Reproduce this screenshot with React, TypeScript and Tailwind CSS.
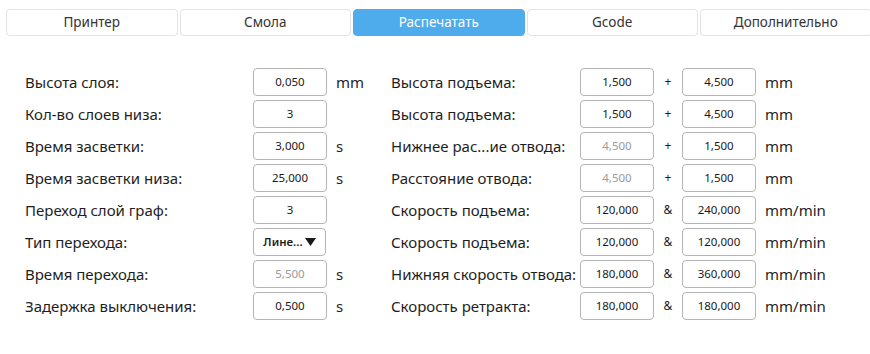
import React from 'react'

type Field = { value: string; disabled?: boolean }

type LeftRow = {
  label: string
  field?: Field
  select?: string
  unit?: string
}

type RightRow = {
  label: string
  a: Field
  b: Field
  sep: string
  unit: string
}

const tabs = ['Принтер', 'Смола', 'Распечатать', 'Gcode', 'Дополнительно']

const leftRows: LeftRow[] = [
  { label: 'Высота слоя:', field: { value: '0,050' }, unit: 'mm' },
  { label: 'Кол-во слоев низа:', field: { value: '3' } },
  { label: 'Время засветки:', field: { value: '3,000' }, unit: 's' },
  { label: 'Время засветки низа:', field: { value: '25,000' }, unit: 's' },
  { label: 'Переход слой граф:', field: { value: '3' } },
  { label: 'Тип перехода:', select: 'Лине...' },
  { label: 'Время перехода:', field: { value: '5,500', disabled: true }, unit: 's' },
  { label: 'Задержка выключения:', field: { value: '0,500' }, unit: 's' },
]

const rightRows: RightRow[] = [
  { label: 'Высота подъема:', a: { value: '1,500' }, b: { value: '4,500' }, sep: '+', unit: 'mm' },
  { label: 'Высота подъема:', a: { value: '1,500' }, b: { value: '4,500' }, sep: '+', unit: 'mm' },
  { label: 'Нижнее рас...ие отвода:', a: { value: '4,500', disabled: true }, b: { value: '1,500' }, sep: '+', unit: 'mm' },
  { label: 'Расстояние отвода:', a: { value: '4,500', disabled: true }, b: { value: '1,500' }, sep: '+', unit: 'mm' },
  { label: 'Скорость подъема:', a: { value: '120,000' }, b: { value: '240,000' }, sep: '&', unit: 'mm/min' },
  { label: 'Скорость подъема:', a: { value: '120,000' }, b: { value: '120,000' }, sep: '&', unit: 'mm/min' },
  { label: 'Нижняя скорость отвода:', a: { value: '180,000' }, b: { value: '360,000' }, sep: '&', unit: 'mm/min' },
  { label: 'Скорость ретракта:', a: { value: '180,000' }, b: { value: '180,000' }, sep: '&', unit: 'mm/min' },
]

const Box = ({ field }: { field: Field }) => (
  <div
    className={
      'w-[74px] h-[28px] shrink-0 flex items-center justify-center rounded-[4px] border border-[#b4b4b4] bg-white text-[11.5px] ' +
      (field.disabled ? 'text-[#9a9a9a]' : 'text-[#1a1a1a]')
    }
  >
    {field.value}
  </div>
)

export default function App() {
  return (
    <div
      className="w-[870px] h-[354px] bg-white overflow-hidden text-[#1e1e1e]"
      style={{ fontFamily: '"Noto Sans", "Open Sans", sans-serif' }}
    >
      {/* tab bar */}
      <div className="flex gap-[2px] pt-[9px] pl-[6px]">
        {tabs.map((t, i) => (
          <div
            key={t}
            className={
              'w-[171.5px] h-[27px] shrink-0 flex items-center justify-center rounded-[4px] text-[13.5px] ' +
              (i === 2
                ? 'bg-[#4eabec] text-white border border-[#4eabec]'
                : 'bg-white text-[#333] border border-[#e2e2e8]')
            }
          >
            {t}
          </div>
        ))}
      </div>

      <div className="flex mt-[32px] pl-[25px]">
        {/* left column */}
        <div className="w-[366px] flex flex-col gap-[4px]">
          {leftRows.map((r, i) => (
            <div key={i} className="h-[28px] flex items-center">
              <div className="w-[228px] shrink-0 text-[15px]">{r.label}</div>
              {r.field && <Box field={r.field} />}
              {r.select && (
                <div className="w-[73px] h-[28px] shrink-0 flex items-center justify-center gap-[2px] rounded-[4px] border border-[#b4b4b4] bg-white text-[11.5px] font-semibold">
                  <span>{r.select}</span>
                  <svg width="11" height="8" viewBox="0 0 11 8">
                    <path d="M0 0 H11 L5.5 8 Z" fill="#1a1a1a" />
                  </svg>
                </div>
              )}
              {r.unit && <div className="ml-[9px] text-[15px]">{r.unit}</div>}
            </div>
          ))}
        </div>

        {/* right column */}
        <div className="flex flex-col gap-[4px]">
          {rightRows.map((r, i) => (
            <div key={i} className="h-[28px] flex items-center">
              <div className="w-[189px] shrink-0 text-[15px] whitespace-nowrap">{r.label}</div>
              <Box field={r.a} />
              <div className="w-[28px] shrink-0 text-center text-[12px]">{r.sep}</div>
              <Box field={r.b} />
              <div className="ml-[9px] text-[15px]">{r.unit}</div>
            </div>
          ))}
        </div>
      </div>
    </div>
  )
}
